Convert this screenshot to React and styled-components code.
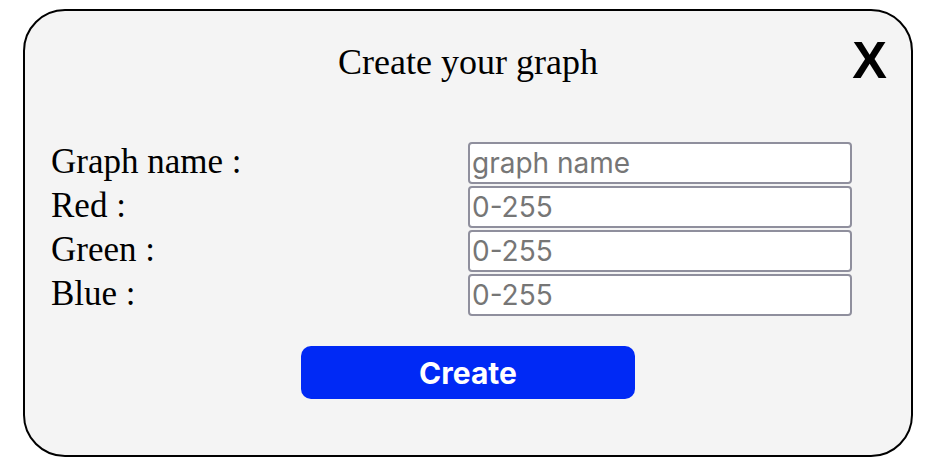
import React from 'react';
import styled, { createGlobalStyle } from 'styled-components';

const GlobalStyle = createGlobalStyle`
  body {
    margin: 0;
    background: #ffffff;
    font-family: "Liberation Serif", "Times New Roman", serif;
  }
`;

const Page = styled.div`
  display: flex;
  justify-content: center;
  padding-top: 9px;
`;

const Modal = styled.div`
  position: relative;
  box-sizing: border-box;
  width: 890px;
  height: 448px;
  background: #f4f4f4;
  border: 2px solid #000000;
  border-radius: 42px;
  padding: 30px 26px 0 26px;
  display: flex;
  flex-direction: column;
`;

const Title = styled.h1`
  margin: 0;
  font-size: 36px;
  font-weight: normal;
  text-align: center;
  color: #000000;
`;

const CloseButton = styled.button`
  position: absolute;
  top: 23px;
  right: 24px;
  background: none;
  border: none;
  padding: 0;
  cursor: pointer;
  font-family: "Liberation Sans", Arial, sans-serif;
  font-weight: bold;
  font-size: 52px;
  line-height: 1;
  color: #000000;
`;

const Form = styled.form`
  margin-top: 59px;
  display: grid;
  grid-template-columns: 417px 384px;
  grid-auto-rows: 42px;
  row-gap: 2px;
`;

const Label = styled.label`
  font-size: 35px;
  line-height: normal;
  color: #000000;
  white-space: nowrap;
`;

const Field = styled.input`
  box-sizing: border-box;
  width: 384px;
  height: 42px;
  margin: 0;
  padding: 0 2px;
  border: 2px solid #8f8f9d;
  border-radius: 4px;
  background: #ffffff;
  font-family: Inter, "Liberation Sans", sans-serif;
  font-size: 28px;
  color: #000000;
  outline: none;

  &::placeholder {
    color: #767676;
  }
`;

const Actions = styled.div`
  display: flex;
  justify-content: center;
  margin-top: 30px;
`;

const SubmitButton = styled.button`
  width: 334px;
  height: 53px;
  border: none;
  border-radius: 10px;
  background: #0029f5;
  color: #ffffff;
  font-family: Inter, "Liberation Sans", sans-serif;
  font-weight: 700;
  font-size: 30px;
  cursor: pointer;
`;

const fields = [
  { id: 'name', label: 'Graph name :', placeholder: 'graph name' },
  { id: 'red', label: 'Red :', placeholder: '0-255' },
  { id: 'green', label: 'Green :', placeholder: '0-255' },
  { id: 'blue', label: 'Blue :', placeholder: '0-255' },
];

export default function App() {
  return (
    <>
      <GlobalStyle />
      <Page>
        <Modal>
          <Title>Create your graph</Title>
          <CloseButton type="button">X</CloseButton>
          <Form onSubmit={(e) => e.preventDefault()}>
            {fields.map((f) => (
              <React.Fragment key={f.id}>
                <Label htmlFor={f.id}>{f.label}</Label>
                <Field id={f.id} placeholder={f.placeholder} />
              </React.Fragment>
            ))}
          </Form>
          <Actions>
            <SubmitButton type="button">Create</SubmitButton>
          </Actions>
        </Modal>
      </Page>
    </>
  );
}
